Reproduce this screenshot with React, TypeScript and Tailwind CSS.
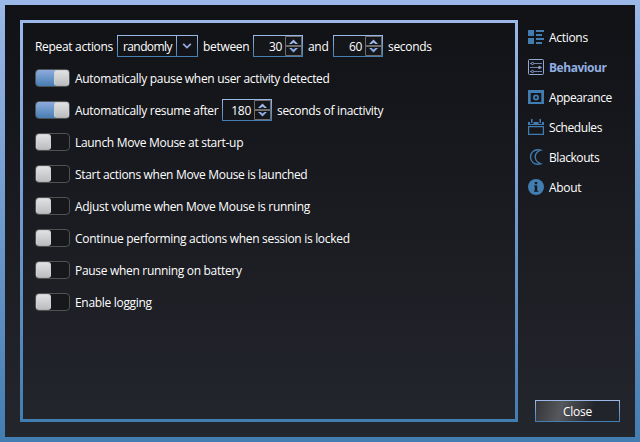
import type { ReactNode } from "react";

const edge = "bg-linear-to-b from-[#9bb8e8] to-[#427db2]";

function Text({ w = "w-auto", children }: { w?: string; children: ReactNode }) {
  return <span className={`block shrink-0 whitespace-nowrap pt-[2px] tracking-[-0.31px] ${w}`}>{children}</span>;
}

function Toggle({ on = false }: { on?: boolean }) {
  return (
    <span
      className={`flex h-[18px] w-[35px] shrink-0 rounded-[4px] border border-[#505153] ${
        on ? "justify-end bg-linear-to-b from-[#8eabdc] to-[#457eb3]" : "justify-start bg-[#17181c]"
      }`}
    >
      <span className="h-4 w-[15px] rounded-[3px] border border-[#d0d1d2] border-b-[#b0b1b3] bg-linear-to-b from-[#e0e1e2] to-[#bcbdbf]" />
    </span>
  );
}

function Spinner({ value }: { value: number }) {
  return (
    <span className={`block h-[22px] w-[50px] shrink-0 p-px ${edge}`}>
      <span className="flex h-5 bg-[#15161a]">
        <span className="flex-1 pr-[3px] text-right leading-[21px] tracking-[-0.3px]">{value}</span>
        <svg className="h-5 w-[17px]" viewBox="0 0 17 20">
          <path d="M.5 .5H16.5V19.5H.5Z" fill="none" stroke="#6d6d6d" />
          <path d="M0 10H17" stroke="#6d6d6d" strokeWidth="2" />
          <path d="M4 8L8.5 3.5L13 8H10.3L8.5 6.6L6.7 8Z" fill="#a0bbea" />
          <path d="M4 12L8.5 16.5L13 12H10.3L8.5 13.4L6.7 12Z" fill="#8ba9dc" />
        </svg>
      </span>
    </span>
  );
}

function Row({ children }: { children: ReactNode }) {
  return <div className="flex h-8 items-center gap-[5px]">{children}</div>;
}

const options = [
  "Launch Move Mouse at start-up",
  "Start actions when Move Mouse is launched",
  "Adjust volume when Move Mouse is running",
  "Continue performing actions when session is locked",
  "Pause when running on battery",
  "Enable logging",
];

const nav: { label: string; track: string; icon: ReactNode }[] = [
  {
    label: "Actions",
    track: "tracking-[-0.3px]",
    icon: <path fill="#427db2" d="M0 1H6V7H0ZM0 9H6V15H0ZM8 1H16V3H8ZM8 5H14V7H8ZM8 9H16V11H8ZM8 13H14V15H8Z" />,
  },
  {
    label: "Behaviour",
    track: "tracking-[-0.45px]",
    icon: (
      <g fill="none" stroke="#91a9d4">
        <rect x=".5" y=".5" width="15" height="15" rx="1" />
        <path d="M2 4.5H3M6 4.5H14M2 8.5H10M13 8.5H14M2 12.5H3M6 12.5H14" opacity=".75" />
        <circle cx="4.5" cy="4.5" r="1.1" />
        <circle cx="11.5" cy="8.5" r="1.1" fill="#91a9d4" />
        <circle cx="4.5" cy="12.5" r="1.1" />
      </g>
    ),
  },
  {
    label: "Appearance",
    track: "tracking-[-0.42px]",
    icon: (
      <g>
        <path fillRule="evenodd" fill="#427db2" d="M0 1H16V15H0ZM2.7 4V13H13.3V4Z" />
        <circle cx="8" cy="8.5" r="2.1" fill="none" stroke="#427db2" strokeWidth="1.8" />
      </g>
    ),
  },
  {
    label: "Schedules",
    track: "tracking-[-0.4px]",
    icon: (
      <g fill="#427db2">
        <path fillRule="evenodd" d="M0 7H16V16H0ZM1.2 8.2V14.8H14.8V8.2Z" />
        <path d="M0 3H2V5H5.5V3H10.5V5H14V3H16V6H0Z" />
        <path d="M3 0H4.5V4H3ZM11.5 0H13V4H11.5Z" />
      </g>
    ),
  },
  {
    label: "Blackouts",
    track: "tracking-[-0.43px]",
    icon: (
      <path
        d="M12.8 1.2C5.5 -.8 2.5 4.3 2.5 8S5.5 16.8 12.8 14.8C5.4 12 5.4 4 12.8 1.2Z"
        fill="none"
        stroke="#427db2"
        strokeWidth="1.3"
      />
    ),
  },
  {
    label: "About",
    track: "tracking-[-0.3px]",
    icon: (
      <g>
        <circle cx="8" cy="8" r="8" fill="#427db2" />
        <path d="M6.8 3H9.2V5.2H6.8ZM6 6.5H9.2V11.7H10.3V12.8H6V11.7H6.8V7.6H6Z" fill="#17181c" />
      </g>
    ),
  },
];

export default function App() {
  return (
    <div className={`h-[442px] w-[640px] p-[5px] ${edge}`}>
      <div className="flex h-[432px] bg-linear-to-b from-[#111216] to-[#24262d] pt-[15px] pl-[15px] font-['Open_Sans','Noto_Sans',sans-serif] text-[12px] leading-4 text-white">
        <main className={`h-[402px] w-[498px] shrink-0 p-[3px] ${edge}`}>
          <div className="h-[396px] bg-linear-to-b from-[#121317] to-[#23252c] pt-[7px] pl-3">
            <Row>
              <Text w="w-[77px]">Repeat actions</Text>
              <span className={`block h-[22px] w-[81px] shrink-0 p-px ${edge}`}>
                <span className="flex h-5 gap-px">
                  <span className="w-[58px] bg-[#131418] pl-[5px] leading-[21px] tracking-[-0.6px]">randomly</span>
                  <span className="flex flex-1 items-center justify-center bg-[#131418]">
                    <svg className="h-5 w-5" viewBox="0 0 20 20">
                      <path d="M6.2 7.9L10 11.5L13.8 7.9" fill="none" stroke="#93aedf" strokeWidth="1.7" />
                    </svg>
                  </span>
                </span>
              </span>
              <Text w="w-[45px]">between</Text>
              <Spinner value={30} />
              <Text w="w-[20px]">and</Text>
              <Spinner value={60} />
              <Text w="w-[44px]">seconds</Text>
            </Row>
            <Row>
              <Toggle on />
              <Text>Automatically pause when user activity detected</Text>
            </Row>
            <Row>
              <Toggle on />
              <Text w="w-[142px]">Automatically resume after</Text>
              <Spinner value={180} />
              <Text>seconds of inactivity</Text>
            </Row>
            {options.map((label) => (
              <Row key={label}>
                <Toggle />
                <Text>{label}</Text>
              </Row>
            ))}
          </div>
        </main>
        <aside className="flex h-[402px] flex-1 flex-col justify-between">
          <nav className="flex flex-col pt-[2px] pl-[10px]">
            {nav.map((n) => (
              <div
                key={n.label}
                className={`flex h-[30px] items-center gap-[5px] ${n.track} ${
                  n.label === "Behaviour" ? "font-bold text-[#91aee1]" : ""
                }`}
              >
                <svg className="h-4 w-4 shrink-0" viewBox="0 0 16 16">{n.icon}</svg>
                <span className="pt-[2px]">{n.label}</span>
              </div>
            ))}
          </nav>
          <button className={`ml-[17px] block h-[22px] w-[85px] p-px ${edge}`}>
            <span className="block h-5 bg-linear-[105deg] from-[#33353a] via-[#57585b] via-30% to-[#22242b] to-68% text-center leading-[21px] tracking-[-0.3px]">
              Close
            </span>
          </button>
        </aside>
      </div>
    </div>
  );
}
